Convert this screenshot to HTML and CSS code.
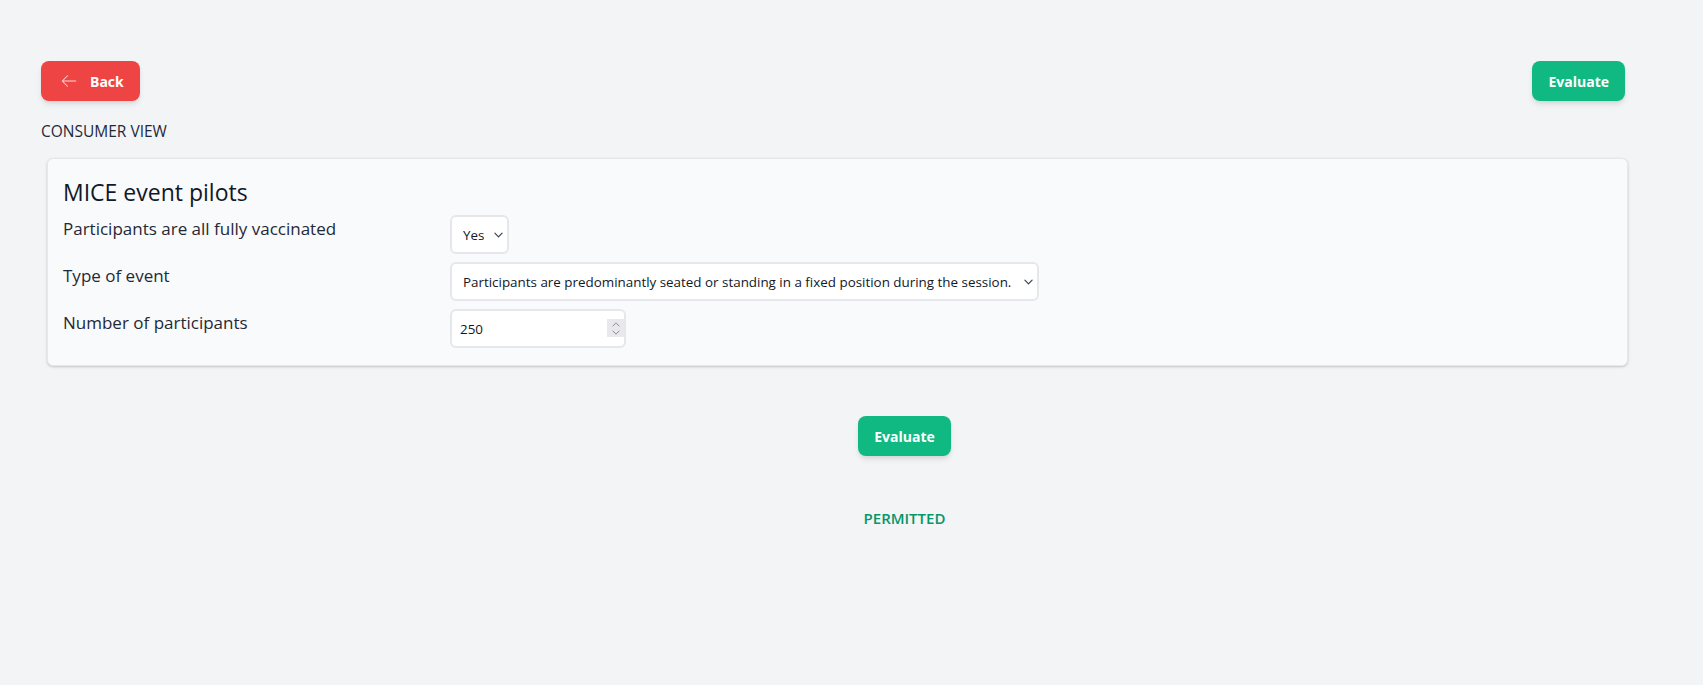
FILE: index.html
```html
<!DOCTYPE html>
<html lang="en">
<head>
<meta charset="utf-8">
<title>Consumer view</title>
<link rel="stylesheet" href="styles.css">
</head>
<body>
<div class="page">
  <div class="topbar">
    <button class="btn btn-red" type="button">
      <svg class="btn-icon" viewBox="0 0 24 24" width="18" height="18" fill="none" stroke="currentColor" stroke-width="1.4" stroke-linecap="round" stroke-linejoin="round"><path d="M10 19l-7-7m0 0l7-7m-7 7h18"/></svg>
      <span>Back</span>
    </button>
    <button class="btn btn-green btn-top" type="button">Evaluate</button>
  </div>
  <div class="view-label">CONSUMER VIEW</div>
  <div class="card">
    <h2 class="card-title">MICE event pilots</h2>
    <div class="row">
      <label class="label">Participants are all fully vaccinated</label>
      <div class="field-cell">
        <div class="field">
          <select class="control select select-short"><option>Yes</option><option>No</option></select>
          <svg class="chev" viewBox="0 0 10 6" width="9" height="6" fill="none" stroke="currentColor" stroke-width="1.3" stroke-linecap="round" stroke-linejoin="round"><path d="M1 1l4 4 4-4"/></svg>
        </div>
      </div>
    </div>
    <div class="row">
      <label class="label">Type of event</label>
      <div class="field-cell">
        <div class="field">
          <select class="control select"><option>Participants are predominantly seated or standing in a fixed position during the session.</option></select>
          <svg class="chev" viewBox="0 0 10 6" width="9" height="6" fill="none" stroke="currentColor" stroke-width="1.3" stroke-linecap="round" stroke-linejoin="round"><path d="M1 1l4 4 4-4"/></svg>
        </div>
      </div>
    </div>
    <div class="row">
      <label class="label">Number of participants</label>
      <div class="field-cell">
        <div class="field">
          <input class="control number" type="number" value="250">
          <span class="spin">
            <svg viewBox="0 0 10 6" width="8" height="5" fill="none" stroke="currentColor" stroke-width="1.2" stroke-linecap="round" stroke-linejoin="round"><path d="M1 5l4-4 4 4"/></svg>
            <svg viewBox="0 0 10 6" width="8" height="5" fill="none" stroke="currentColor" stroke-width="1.2" stroke-linecap="round" stroke-linejoin="round"><path d="M1 1l4 4 4-4"/></svg>
          </span>
        </div>
      </div>
    </div>
  </div>
  <div class="result">
    <button class="btn btn-green" type="button">Evaluate</button>
    <div class="status">PERMITTED</div>
  </div>
</div>
</body>
</html>
```

FILE: styles.css
```css
* { box-sizing: border-box; }
html, body { margin: 0; padding: 0; }
body {
  background: #f3f4f6;
  font-family: "Open Sans", "Noto Sans", "Liberation Sans", sans-serif;
  color: #1f2937;
  min-height: 685px;
}
.page {
  padding: 61px 75px 40px 41px;
}
.topbar {
  display: flex;
  justify-content: space-between;
  align-items: center;
}
.btn {
  display: inline-flex;
  align-items: center;
  height: 40px;
  padding: 0 16px;
  border: none;
  border-radius: 8px;
  color: #ffffff;
  font-family: inherit;
  font-size: 14px;
  font-weight: 700;
  box-shadow: 0 4px 6px -1px rgba(0,0,0,0.10), 0 2px 4px -1px rgba(0,0,0,0.06);
  cursor: pointer;
}
.btn-red { background: #ef4444; }
.btn-green { background: #10b981; padding: 0 16px; }
.btn-top { margin-right: 3px; }
.btn-icon { margin: 0 12px 0 3px; color: #fbd5d5; }
.view-label {
  margin-top: 18px;
  font-size: 15.5px;
  line-height: 24px;
  color: #1e293b;
}
.card {
  margin: 15px 0 0 6px;
  background: #f9fafb;
  border: 1px solid #e5e7eb;
  border-radius: 6px;
  box-shadow: 0 1px 3px rgba(0,0,0,0.12), 0 1px 2px rgba(0,0,0,0.08);
  padding: 16px 16px 17px 15px;
}
.card-title {
  margin: 0;
  font-size: 23px;
  line-height: 34px;
  font-weight: 400;
  color: #111827;
}
.row {
  display: grid;
  grid-template-columns: 1fr 3fr;
  margin-top: 8px;
}
.card-title + .row { margin-top: 6px; }
.label {
  font-size: 17px;
  line-height: 27px;
  color: #1f2937;
}
.field-cell { display: flex; }
.field {
  position: relative;
  display: inline-flex;
}
.control {
  height: 39px;
  background: #ffffff;
  border: 2px solid #e5e7eb;
  border-radius: 6px;
  font-family: inherit;
  font-size: 13.4px;
  color: #111827;
  outline: none;
}
.select {
  -webkit-appearance: none;
  appearance: none;
  padding: 0 25px 0 11px;
}
.select-short { padding-right: 22px; }
.chev {
  position: absolute;
  right: 6px;
  top: 17px;
  color: #374151;
  pointer-events: none;
}
.number {
  width: 176px;
  padding: 0 0 0 8px;
  -moz-appearance: textfield;
}
.number::-webkit-inner-spin-button,
.number::-webkit-outer-spin-button {
  -webkit-appearance: none;
  margin: 0;
}
.spin {
  position: absolute;
  right: 2px;
  top: 10px;
  width: 17px;
  height: 18px;
  background: #e9e9ed;
  display: flex;
  flex-direction: column;
  align-items: center;
  justify-content: center;
  gap: 3px;
  color: #8a8a8f;
  pointer-events: none;
}
.spin svg { display: block; }
.result {
  display: flex;
  flex-direction: column;
  align-items: center;
  padding-left: 140px;
  margin-top: 50px;
}
.status {
  margin-top: 50px;
  font-size: 15px;
  line-height: 24px;
  font-weight: 600;
  color: #059669;
}
```
